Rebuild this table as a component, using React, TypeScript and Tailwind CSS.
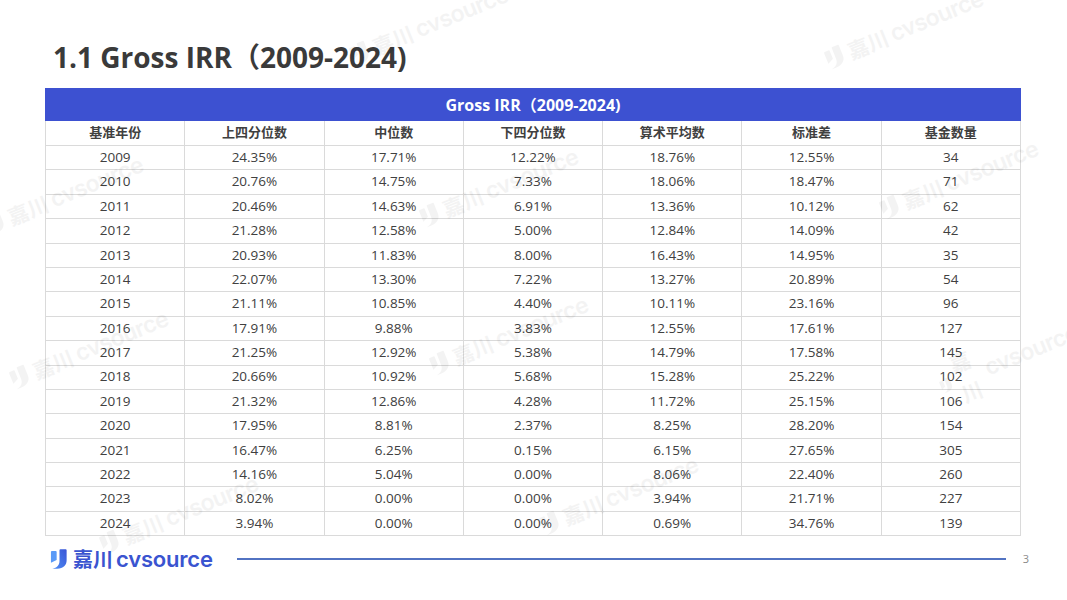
const headers = ["基准年份", "上四分位数", "中位数", "下四分位数", "算术平均数", "标准差", "基金数量"];

const rows: string[][] = [
  ["2009", "24.35%", "17.71%", "12.22%", "18.76%", "12.55%", "34"],
  ["2010", "20.76%", "14.75%", "7.33%", "18.06%", "18.47%", "71"],
  ["2011", "20.46%", "14.63%", "6.91%", "13.36%", "10.12%", "62"],
  ["2012", "21.28%", "12.58%", "5.00%", "12.84%", "14.09%", "42"],
  ["2013", "20.93%", "11.83%", "8.00%", "16.43%", "14.95%", "35"],
  ["2014", "22.07%", "13.30%", "7.22%", "13.27%", "20.89%", "54"],
  ["2015", "21.11%", "10.85%", "4.40%", "10.11%", "23.16%", "96"],
  ["2016", "17.91%", "9.88%", "3.83%", "12.55%", "17.61%", "127"],
  ["2017", "21.25%", "12.92%", "5.38%", "14.79%", "17.58%", "145"],
  ["2018", "20.66%", "10.92%", "5.68%", "15.28%", "25.22%", "102"],
  ["2019", "21.32%", "12.86%", "4.28%", "11.72%", "25.15%", "106"],
  ["2020", "17.95%", "8.81%", "2.37%", "8.25%", "28.20%", "154"],
  ["2021", "16.47%", "6.25%", "0.15%", "6.15%", "27.65%", "305"],
  ["2022", "14.16%", "5.04%", "0.00%", "8.06%", "22.40%", "260"],
  ["2023", "8.02%", "0.00%", "0.00%", "3.94%", "21.71%", "227"],
  ["2024", "3.94%", "0.00%", "0.00%", "0.69%", "34.76%", "139"],
];

// faint diagonal watermarks scattered over the slide
const marks = [
  "left-[345px] top-[8px]",
  "left-[820px] top-[12px]",
  "left-[-20px] top-[178px]",
  "left-[415px] top-[170px]",
  "left-[875px] top-[162px]",
  "left-[5px] top-[332px]",
  "left-[425px] top-[318px]",
  "left-[935px] top-[328px]",
  "left-[95px] top-[497px]",
  "left-[535px] top-[478px]",
];

const LogoMark = ({ className }: { className?: string }) => (
  <svg viewBox="0 0 20 22" className={className}>
    <defs>
      <linearGradient id="lg1" x1="0" y1="1" x2="1" y2="0">
        <stop offset="0" stopColor="#4f8ff5" />
        <stop offset="1" stopColor="#3a55d6" />
      </linearGradient>
    </defs>
    <path d="M2 2.5 h4 a1 1 0 0 1 1 1 v8.5 l-6 3 v-11.5 a1 1 0 0 1 1 -1 z" fill="#5a9af7" />
    <path d="M11 0.8 h5.5 a1 1 0 0 1 1 1 v10.5 c0 5.5 -3.5 8.5 -10 9 h-5 c5 -1.2 7.5 -3.6 7.5 -8.5 v-11 a1 1 0 0 1 1 -1 z" fill="url(#lg1)" />
  </svg>
);

const Watermark = ({ pos }: { pos: string }) => (
  <div className={`absolute ${pos} pointer-events-none select-none flex items-center gap-1 -rotate-[22deg] opacity-[0.045] text-black`}>
    <svg viewBox="0 0 20 22" className="w-[20px] h-[22px]">
      <path d="M2 2.5 h4 a1 1 0 0 1 1 1 v8.5 l-6 3 v-11.5 a1 1 0 0 1 1 -1 z" fill="#000" />
      <path d="M11 0.8 h5.5 a1 1 0 0 1 1 1 v10.5 c0 5.5 -3.5 8.5 -10 9 h-5 c5 -1.2 7.5 -3.6 7.5 -8.5 v-11 a1 1 0 0 1 1 -1 z" fill="#000" />
    </svg>
    <span className="text-[21px] font-bold font-['Noto_Sans_CJK_SC',sans-serif]">嘉川</span>
    <span className="text-[23px] font-semibold font-['Inter',sans-serif] tracking-tight">cvsource</span>
  </div>
);

export default function App() {
  return (
    <div className="relative w-[1067px] h-[600px] overflow-hidden bg-white font-['Open_Sans','Noto_Sans_CJK_SC',sans-serif]">
      <div className="pt-[39px] pl-[53px] text-[28px] leading-[36px] font-bold text-[#3a3a3a]">
        1.1 Gross IRR（2009-2024)
      </div>

      <div className="mt-[13px] ml-[45px] w-[976px]">
        <table className="w-full border-collapse table-fixed text-[#404040]">
          <thead>
            <tr className="h-[32px] bg-[#3d51d1]">
              <th colSpan={7} className="text-white text-[16px] font-bold border border-[#3d51d1]">
                Gross IRR（2009-2024)
              </th>
            </tr>
            <tr className="h-[25px]">
              {headers.map((h) => (
                <th key={h} className="border border-[#dadada] text-[13px] font-bold text-[#404040]">
                  {h}
                </th>
              ))}
            </tr>
          </thead>
          <tbody>
            {rows.map((r) => (
              <tr key={r[0]} className="h-[24.4px]">
                {r.map((c, i) => (
                  <td key={i} className="border border-[#dadada] text-center text-[13.5px] leading-none text-[#404040]">
                    {c}
                  </td>
                ))}
              </tr>
            ))}
          </tbody>
        </table>
      </div>

      <div className="mt-[11px] ml-[50px] flex items-center h-[24px]">
        <LogoMark className="w-[19px] h-[22px]" />
        <span className="ml-[4px] text-[20px] leading-none font-bold text-[#3a54d0] font-['Noto_Sans_CJK_SC',sans-serif]">嘉川</span>
        <span className="ml-[3px] text-[22px] leading-none font-semibold text-[#3a54d0] font-['Inter',sans-serif] tracking-[-0.2px]">cvsource</span>
        <div className="ml-[24px] w-[769px] h-[2px] bg-[#5273c2]" />
        <span className="ml-[17px] text-[11px] text-[#8a8a8a]">3</span>
      </div>

      {marks.map((m) => (
        <Watermark key={m} pos={m} />
      ))}
    </div>
  );
}
